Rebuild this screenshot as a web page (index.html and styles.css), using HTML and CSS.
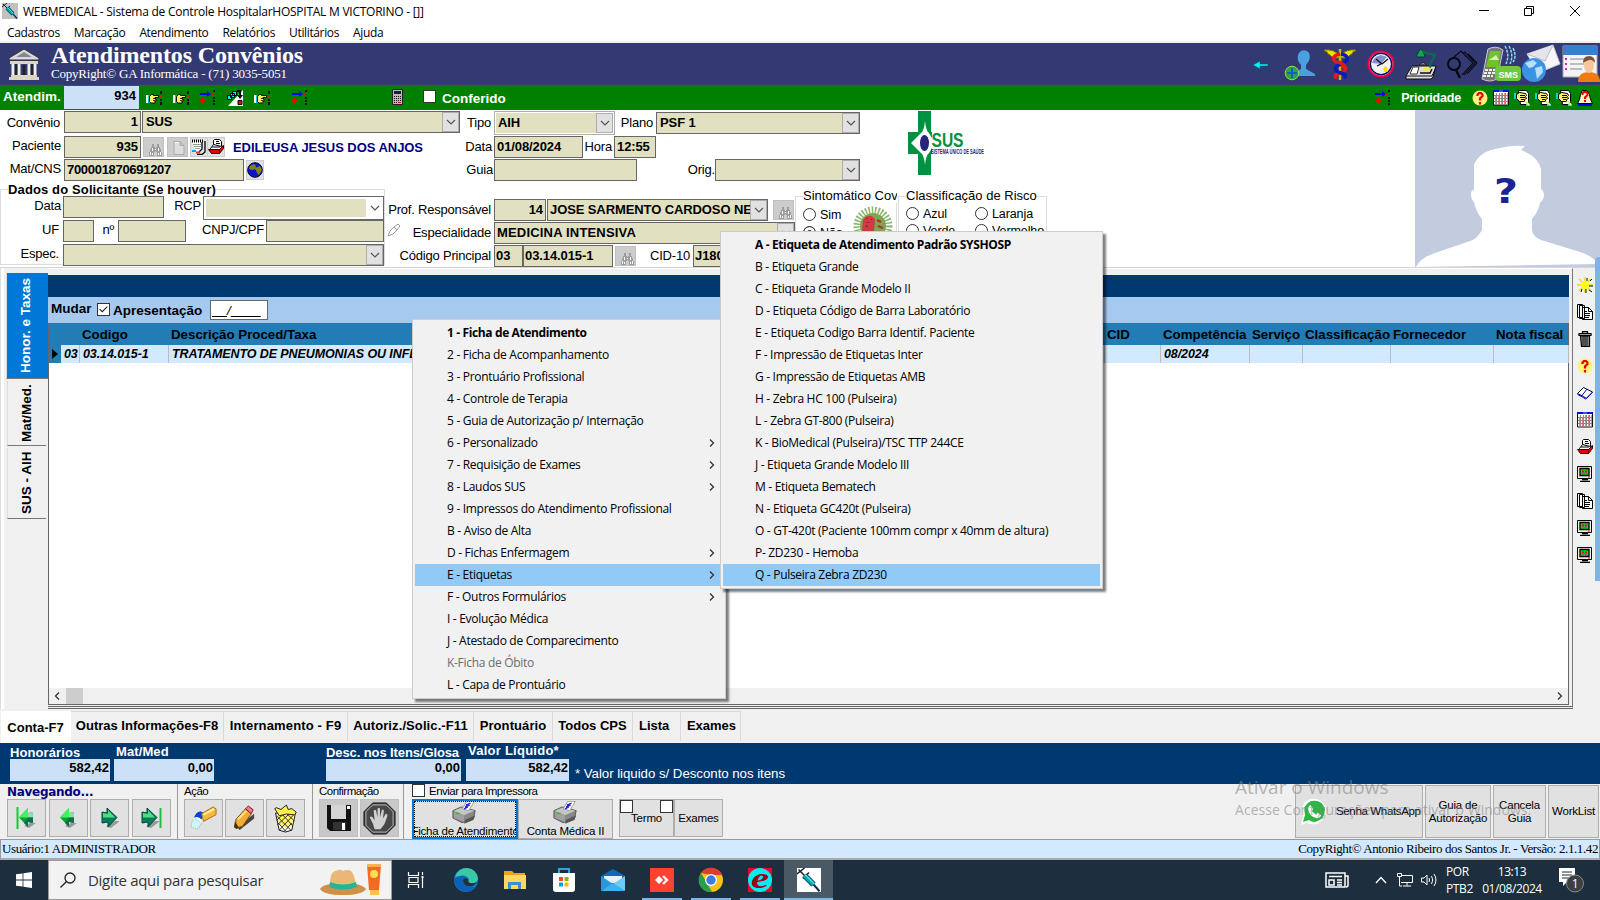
FILE: index.html
```html
<!DOCTYPE html>
<html lang="pt-BR">
<head>
<meta charset="utf-8">
<title>WEBMEDICAL - Sistema de Controle Hospitalar</title>
<link rel="stylesheet" href="styles.css">
</head>
<body>
<svg class="defs" aria-hidden="true">
  <symbol id="syringe" viewBox="0 0 16 16"><path d="M1 1l4 4M0 4l5-4M4 7l4-4" stroke="#222" stroke-width="1"/><path d="M5 5l6 6" stroke="#045" stroke-width="4"/><path d="M5 5l6 6" stroke="#0aa" stroke-width="2.600"/><path d="M5.500 4.500l6 6" stroke="#4de" stroke-width="1"/><path d="M11 11l4 4.500" stroke="#14305a" stroke-width="1.400"/></symbol>
  <symbol id="hand" viewBox="0 0 16 16"><path d="M0 5h2v8H0z" fill="#fff"/><path d="M2 5h1.500v8H2z" fill="#00c8d8"/><path d="M3.500 6.500l2-2h2v1h5v2H9v1.500h1V11H9v2H5l-1.500-1.500z" fill="#ffef60" stroke="#000" stroke-width=".9"/><path d="M7 8.500h3M7 10.500h2" stroke="#000" stroke-width=".8"/><path d="M15 1v3M15 9v2M15 12v3" stroke="#111" stroke-width="2"/><path d="M14 5.500h2v2h-2z" fill="#e11"/></symbol>
  <symbol id="route" viewBox="0 0 16 16"><path d="M0 4h9" stroke="#00f" stroke-width="2"/><path d="M7 1l4 3-4 3z" fill="#00f"/><path d="M0 11h6M3 8v6" stroke="#f00" stroke-width="2"/><path d="M14 0v2M14 7v2M14 10v2M14 13v2" stroke="#111" stroke-width="2"/><path d="M11 3h2v2h-2z" fill="#f00"/></symbol>
  <symbol id="boxes" viewBox="0 0 16 16"><path d="M1 16L16 0v16z" fill="#fff"/><path d="M5.500 1.500h4v4h-4zM3.500 3.500h4v4h-4zM.5 5.500h4v4h-4z" fill="#0ee" stroke="#000"/><path d="M10 1h3v5" stroke="#000" stroke-width="2" fill="none"/><path d="M10 5h6l-3 4z"/><path d="M11 10.500h4v4h-4z" fill="#f00" stroke="#000"/></symbol>
  <symbol id="calc" viewBox="0 0 11 16"><path d="M.5.5h10v15H.5z" fill="#bbb" stroke="#222"/><path d="M2 2h7v3H2z" fill="#123"/><path d="M2 7.500h7M2 9.500h7M2 11.500h7M2 13.500h4" stroke="#111" stroke-dasharray="1 1"/><path d="M6 13.500h3" stroke="#f00"/></symbol>
  <symbol id="bino" viewBox="0 0 13 12"><path d="M3 0h2v3H3zM8 0h2v3H8zM2 3h4v2H2zM7 3h4v2H7zM1 5h5v3H1zM7 5h5v3H7zM0 8h5v4H0zM8 8h5v4H8zM5.500 4h2v3h-2z" fill="#9d9d9d"/><path d="M3 4h1v3H3zM9 4h1v3H9zM1 8h1v3H1zM3 9h1v2H3zM9 9h1v2H9zM11 8h1v3h-1zM6 5h1v1H6z" fill="#fff"/></symbol>
  <symbol id="doc" viewBox="0 0 12 14"><path d="M1 .5h6l4 4v9H1zM7 .5v4h4" fill="#ddd" stroke="#aaa"/><path d="M2 1.500h4" stroke="#fff"/></symbol>
  <symbol id="notes" viewBox="0 0 14 16"><path d="M0 2.500h10v7l-3 4H4z" fill="#fff"/><path d="M.5.5v3M2.500.5v3M4.500.5v3M6.500.5v3M8.500.5v3M10.500.5v3" stroke="#000"/><path d="M1 5.500h8M2 7.500h7M3 9.500h5" stroke="#999"/><path d="M10 3v7l-3 3M13 2v11l-3 2.500H5" fill="none" stroke="#000" stroke-width="1.300"/><path d="M0 12h4" stroke="#00a0ff" stroke-width="2"/><path d="M4 13.500h4" stroke="#e33" stroke-width="2"/></symbol>
  <symbol id="tray" viewBox="0 0 16 16"><path d="M2.500 9.500l3-4h8l1 3-3 4h-8z" fill="#fff" stroke="#000"/><path d="M5.500 5.500v-4l1-1h5l2 2v5z" fill="#fff" stroke="#000"/><path d="M8 2.500h3M8 4.500h4M4 8h8" stroke="#000"/><path d="M.500 10.500h11l4-4v3l-4 5h-8z" fill="#e00000" stroke="#300"/><path d="M11.500 10.500v4" stroke="#600"/></symbol>
  <symbol id="globe" viewBox="0 0 16 16"><circle cx="8" cy="8" r="7.300" fill="#0a14cf" stroke="#003"/><path d="M3 4l4-2 2 2-1 3-3 1-3-1zM8 6l5-2 2 4-3 5-2-2-1-3-2-1z" fill="#868216"/></symbol>
  <symbol id="chev" viewBox="0 0 10 6"><path d="M1 1l4 4 4-4" fill="none" stroke="#555" stroke-width="1.200"/></symbol>
  <symbol id="right" viewBox="0 0 6 8"><path d="M1 .5L4.500 4 1 7.500" fill="none" stroke="#333" stroke-width="1.300"/></symbol>
  <symbol id="papers" viewBox="0 0 16 16"><path d="M.5.500h5v13h-5zM2.500 1.500h5v13h-5zM5.500 3.500h6l4 4v8h-10z" fill="#fff" stroke="#000"/><path d="M11.500 3.500v4h4" fill="none" stroke="#000"/><path d="M7 7.500h3M7 9.500h6M7 11.500h6M7 13.500h5" stroke="#000"/></symbol>
  <symbol id="pc" viewBox="0 0 16 16"><path d="M.5.500h14v12H.5z" fill="#eee" stroke="#000"/><path d="M3 2.500h9v7H3z" fill="#0d0" stroke="#000" stroke-width="1.300"/><path d="M5 4.500h2v2H5zM8 4.500h2v2H8z" fill="#f00"/><path d="M5 6.500h5v1H5z" fill="#f0f"/><path d="M11 11h2" stroke="#f00"/><path d="M5 13.500h6M3 15.500h10" stroke="#000" stroke-width="1.300"/></symbol>
  <symbol id="cal" viewBox="0 0 16 16"><path d="M.5 1h15v14H.5z" fill="#fff" stroke="#111"/><path d="M0 0h16v2H0z" fill="#0012e8"/><path d="M6 1h4" stroke="#88f"/><path d="M1 5.500h14M1 8.500h14M1 11.500h14M3.500 3v12M6.500 3v12M9.500 3v12M12.500 3v12" stroke="#888"/><path d="M2 7h13M2 10h13M2 13h13M8 4h7" stroke="#f00" stroke-dasharray="1 2"/></symbol>
  <symbol id="help" viewBox="0 0 16 16"><circle cx="8" cy="8" r="7.500" fill="#fff37a"/><path d="M5.500 6V4.500L7 3h2l1.500 1.500V6L8 8.500v2M8 12v2.500" fill="none" stroke="#e80000" stroke-width="2.200"/></symbol>
  <symbol id="scribe" viewBox="0 0 16 16"><path d="M4.500.5h8l2 3v8l-2 3h-6z" fill="#fff" stroke="#000"/><path d="M2.500 4.500l3-2 6 1 1 2-1 1 1 2-2 1v2h-5l-3-3z" fill="#ffec75" stroke="#000"/><path d="M6 5.500h5M6 7.500h5M7 9.500h3" stroke="#000"/><path d="M0 3h2v6H0zM12 14h4v2h-4z" fill="#00d6df"/><path d="M11 11l4 4" stroke="#ffec75" stroke-width="2"/></symbol>
  <symbol id="wizard" viewBox="0 0 16 16"><path d="M.5 13.500l2-4 1-5 2-4h4l3 4 1 5 2 4z" fill="#fff9c0" stroke="#000"/><path d="M5.500 5V3.500L7 2h2l1.500 1.500V5L8 7.500V9M8 10v2" fill="none" stroke="#e00" stroke-width="2"/><path d="M1 15h14" stroke="#00f" stroke-width="2"/></symbol>
  <symbol id="sun" viewBox="0 0 16 16"><path d="M8 0v16M0 8h16M2 2l12 12M2 14L14 2" stroke="#e6dd00" stroke-width="1.400"/><path d="M9 12v4M12 13l3 2M12 9h4M10 1v3M13 4l2-2M4 15l1-3" stroke="#111"/><circle cx="8" cy="8" r="4" fill="#ffff00"/></symbol>
  <symbol id="trash" viewBox="0 0 16 16"><path d="M5.500 2V.500h5V2M2 2.500h12v2H2zM3.500 5h9v10.500h-8z" fill="#999" stroke="#000" stroke-width="1.200"/><path d="M6 5v10M8 5v10M10 5v10" stroke="#000"/></symbol>
  <symbol id="book" viewBox="0 0 16 16"><path d="M.5 8.500l6-6 3 1.500 6 3-6 6.500-3-2z" fill="#fff" stroke="#000"/><path d="M5 10.500L10 4M.500 9.500l5 2.500 3 2 7-6.500" fill="none" stroke="#00e"/></symbol>
  <symbol id="printer" viewBox="0 0 28 24"><path d="M1 10l9-4 15 4-2 9-12 4L1 18z" fill="#888" stroke="#555"/><path d="M2 10l8-3 14 3-11 5z" fill="#c5c5c5"/><path d="M2 11l11 4v7L2 18z" fill="#a0a0a0"/><path d="M11 8l5-8h8l-6 10z" fill="#fff" stroke="#999"/><path d="M15 4l5-2M14 6l5-2M13 8l4-2" stroke="#2222e0" stroke-width="1.500"/><path d="M4 13h4" stroke="#24c32a" stroke-width="1.500"/><path d="M14 20l11-5-2 5-10 4z" fill="#555"/></symbol>
  <symbol id="navleft" viewBox="0 0 18 22"><path d="M6 19l6-3h6l-7 5z" fill="#999"/><path d="M1 10.500L10 1v5l5-1v11l-5-1v5z" fill="#149c38"/><path d="M1 10.500L10 1v9.500z" fill="#3cf45a"/><path d="M10 6l5-1v5.500h-5z" fill="#8fdcae"/><path d="M10 10.500h5V16l-5-1v5l-4-4z" fill="#08704a"/></symbol>
  <symbol id="navright" viewBox="0 0 18 22"><path d="M5 20l9-6h5l-9 7z" fill="#999"/><path d="M1 5l5 1V1l10 9.500L7 20v-5l-6 1z" fill="#087c5c" stroke="#044"/><path d="M2 6l5 1V3l7 7.500H2z" fill="#4fe07c"/></symbol>
</svg>

<header class="titlebar">
  <svg class="app-icon"><use href="#syringe"/></svg>
  <span class="title">WEBMEDICAL - Sistema de Controle HospitalarHOSPITAL M VICTORINO - []]</span>
  <svg class="win-btns" viewBox="0 0 110 16"><path d="M4 7.500h10M49.500 5.500h7v7h-7zM51.500 5.500v-2h7v7h-2M95 3l10 10M105 3L95 13" fill="none" stroke="#000"/></svg>
</header>
<nav class="menubar"><span>Cadastros</span><span>Marcação</span><span>Atendimento</span><span>Relatórios</span><span>Utilitários</span><span>Ajuda</span></nav>

<section class="banner">
  <svg class="bank" viewBox="0 0 32 32"><path d="M1 10L16 1l15 9v2H1z" fill="#d9d9d9" stroke="#333"/><path d="M8 9l8-5 8 5z" fill="#888"/><path d="M2 13h28v3H2zM3 27h26v2H3zM1 29h30v3H1z" fill="#d9d6c4"/><path d="M5 16v11M11 16v11M21 16v11M27 16v11" stroke="#eee" stroke-width="3"/><path d="M8 16v11M16 17v10M24 16v11" stroke="#222" stroke-width="2.500"/></svg>
  <div class="brand"><h1>Atendimentos Convênios</h1><p>CopyRight© GA Informática - (71) 3035-5051</p></div>
  <div class="banner-icons">
    <svg class="b-arrow" viewBox="0 0 16 10"><path d="M0 5l7-4v3h8v2H7v3z" fill="#00f0f8" stroke="#055" stroke-width=".5"/></svg>
    <svg class="b-user" viewBox="0 0 32 32"><path d="M10 27l4-5 3-2v-4c-4-4-4-9-2-12 3-4 8-3 10 0 2 4 0 9-3 12v4l9 5v2z" fill="#4a9fe0"/><circle cx="8" cy="24" r="6.800" fill="#23a84d" stroke="#a2d935"/><path d="M8 19v10M3 24h10" stroke="#1c5cc0" stroke-width="2"/></svg>
    <svg class="b-cad" viewBox="0 0 32 32"><path d="M15 7Q10 1 0 2q1 2 3 2 0 2 3 3 1 3 9 3zM17 7q5-6 15-5-1 2-3 2 0 2-3 3-1 3-9 3z" fill="#efe000" stroke="#776b00"/><path d="M16 1v31" stroke="#c8b800" stroke-width="2.500"/><path d="M16 6c-9 2-8 7 0 10s7 7 0 9-5 4-3 5" fill="none" stroke="#e11b1b" stroke-width="3.500"/><path d="M17 6c9 2 8 7 0 10s-7 7 0 9 4 4 3 5" fill="none" stroke="#0b18c8" stroke-width="3.500"/><path d="M14 14q8 2 6 7" fill="none" stroke="#e11b1b" stroke-width="3.500"/></svg>
    <svg class="b-clock" viewBox="0 0 28 28"><circle cx="14" cy="14" r="12.500" fill="#f2f2f8" stroke="#ff0044" stroke-width="2"/><circle cx="14" cy="14" r="10.700" fill="none" stroke="#101060" stroke-width="1.500"/><path d="M5 13q2-7 9-8l6 2-6 7z" fill="#8290cc"/><path d="M9 9l6 5 6-5M10 16l4-2" stroke="#111" fill="none" stroke-width="1.300"/><path d="M16.500 22v-4l2-2 2 2v4z" fill="#ffe200"/></svg>
    <svg class="b-desk" viewBox="0 0 32 32"><path d="M1 28l6-10h24l-3 11-2 2H1z" fill="#ddd" stroke="#111"/><path d="M1 28h26l4-9" fill="none" stroke="#111"/><path d="M5 26l3-7h6l-2 7z" fill="#fff" stroke="#333"/><path d="M15 25h10l2-4" stroke="#111" fill="none" stroke-width="1.500"/><path d="M11 9l4-8 3 2 2 6z" fill="#13a463" stroke="#042"/><path d="M17 3l4 2 9 2-5 9v4" fill="none" stroke="#087049" stroke-width="2"/><path d="M18 21h7" stroke="#ffe544" stroke-width="3"/><path d="M14 17l4-3 4 3z" fill="#888" stroke="#222"/></svg>
    <svg class="b-find" viewBox="0 0 32 32"><circle cx="8" cy="14" r="6" fill="none" stroke="#080812" stroke-width="2"/><path d="M10 20l4 8" stroke="#080812" stroke-width="2.500"/><path d="M8 7l7-6 12 12-11 12M17 4l2-2 10 11-11 12M22 4l9 9-10 11" fill="none" stroke="#080812" stroke-width="1.100"/></svg>
    <svg class="b-sms" viewBox="0 0 40 38"><path d="M7 4q8-4 15 1l-6 29q-7 4-15 0z" fill="#777" stroke="#ccc"/><path d="M9 6h11l-3 16H5z" fill="#6ec22c"/><path d="M8 15l7-5 3 5z" fill="#d2f5a8"/><path d="M4 25h11M3 28h11M2 31h10" stroke="#eee" stroke-width="2" stroke-dasharray="3 1"/><path d="M24 1q5 9 1 18M28 1q5 9 1 18M32 3q4 8 0 14" fill="none" stroke="#8adcee" stroke-width="1.500" stroke-dasharray="3 1"/><rect x="14" y="21" width="26" height="15" rx="4" fill="#6fc93e"/><text x="17.500" y="32.500" class="sms">SMS</text></svg>
    <svg class="b-mail" viewBox="0 0 40 38"><path d="M6 9L32 0l7 19-22 9z" fill="#f6f6fa" stroke="#c5c5d4"/><path d="M6 9l18 7 8-16" fill="#e4e4ed" stroke="#bbb"/><circle cx="13" cy="25" r="12" fill="#3b93e4"/><path d="M4 18l8-3 4 3-4 4-4 1zM14 23l7-2 1 6-6 7z" fill="#b8def9"/></svg>
    <svg class="b-card" viewBox="0 0 38 38"><path d="M1 1h34v31H1z" fill="#f4f4f8" stroke="#aaa"/><path d="M1 1h34v9H1z" fill="#367fce"/><path d="M8 14h14M8 19h14M8 24h12" stroke="#aaa" stroke-width="1.500"/><path d="M3 14h2M3 19h2M3 24h2" stroke="#c42aac" stroke-width="2"/><path d="M16 37q0-10 11-10t11 10z" fill="#f07b10"/><ellipse cx="27" cy="20" rx="5" ry="8" fill="#f6c799"/><path d="M21 18q0-7 6-7t6 7q-3-4-6-3t-6 3" fill="#805037"/></svg>
  </div>
</section>

<section class="greenbar">
  <label class="g-label">Atendim.</label><div class="g-value">934</div>
  <div class="g-icons"><svg><use href="#hand"/></svg><svg><use href="#hand"/></svg><svg><use href="#route"/></svg><svg><use href="#boxes"/></svg><svg><use href="#hand"/></svg><svg class="gap"><use href="#route"/></svg></div>
  <svg class="g-calc"><use href="#calc"/></svg><i class="box"></i><span class="g-conf">Conferido</span>
  <div class="g-right"><svg><use href="#route"/></svg><span>Prioridade</span><svg><use href="#help"/></svg><svg><use href="#cal"/></svg><svg><use href="#scribe"/></svg><svg><use href="#scribe"/></svg><svg><use href="#scribe"/></svg><svg><use href="#wizard"/></svg></div>
</section>

<section class="form">
  <div class="fields">
    <div class="upper">
      <div class="col-a">
        <div class="row r-conv"><label>Convênio</label><div class="in num">1</div><div class="in combo">SUS<b><svg><use href="#chev"/></svg></b></div></div>
        <div class="row r-pac"><label>Paciente</label><div class="in num">935</div><i class="btn dis"><svg class="s-bino"><use href="#bino"/></svg></i><i class="btn dis"><svg class="s-doc"><use href="#doc"/></svg></i><i class="btn"><svg><use href="#notes"/></svg></i><i class="btn"><svg><use href="#tray"/></svg></i><strong>EDILEUSA JESUS DOS ANJOS</strong></div>
        <div class="row r-mat"><label>Mat/CNS</label><div class="in">700001870691207</div><i class="btn"><svg><use href="#globe"/></svg></i></div>
      </div>
      <div class="col-b">
        <div class="row r-tipo"><label>Tipo</label><div class="in combo soft">AIH<b><svg><use href="#chev"/></svg></b></div><label>Plano</label><div class="in combo">PSF 1<b><svg><use href="#chev"/></svg></b></div></div>
        <div class="row r-data"><label>Data</label><div class="in">01/08/2024</div><label>Hora</label><div class="in">12:55</div></div>
        <div class="row r-guia"><label>Guia</label><div class="in"></div><label>Orig.</label><div class="in combo"><b><svg><use href="#chev"/></svg></b></div></div>
      </div>
      <svg class="sus" viewBox="0 0 78 64"><path d="M10 0h13v64H10zM0 21h24v22H0z" fill="#009240"/><path d="M17 10q1 10 4 12l6 10-6 10q-3 2-4 12-1-10-4-12L3 32l10-10q3-2 4-12z" fill="#fff"/><ellipse cx="16.500" cy="32" rx="4.500" ry="8" fill="#27247b"/><text x="23.500" y="36" class="sus-a" textLength="32" lengthAdjust="spacingAndGlyphs">SUS</text><text x="23" y="43" class="sus-b" textLength="53" lengthAdjust="spacingAndGlyphs">SISTEMA ÚNICO DE SAÚDE</text></svg>
    </div>
    <div class="lower">
      <fieldset class="solic"><legend>Dados do Solicitante (Se houver)</legend>
        <div class="row r-s1"><label>Data</label><div class="in"></div><label>RCP</label><div class="in combo white"><b><svg><use href="#chev"/></svg></b></div></div>
        <div class="row r-s2"><label>UF</label><div class="in"></div><label>nº</label><div class="in"></div><label>CNPJ/CPF</label><div class="in"></div></div>
        <div class="row r-s3"><label>Espec.</label><div class="in combo"><b><svg><use href="#chev"/></svg></b></div></div>
      </fieldset>
      <div class="prof">
        <div class="row r-p1"><label>Prof. Responsável</label><div class="in num">14</div><div class="in combo">JOSE SARMENTO CARDOSO NE<b><svg><use href="#chev"/></svg></b></div><i class="btn dis"><svg class="s-bino"><use href="#bino"/></svg></i></div>
        <div class="row r-p2"><svg class="dropper" viewBox="0 0 14 14"><path d="M1 13l2-5 4-4 3 3-4 4zM7 4l4-3 2 2-3 4" fill="#fff" stroke="#999"/></svg><label>Especialidade</label><div class="in combo">MEDICINA INTENSIVA<b><svg><use href="#chev"/></svg></b></div></div>
        <div class="row r-p3"><label>Código Principal</label><div class="in">03</div><div class="in">03.14.015-1</div><i class="btn dis"><svg class="s-bino"><use href="#bino"/></svg></i><label>CID-10</label><div class="in">J180</div></div>
      </div>
      <fieldset class="covid"><legend>Sintomático Covid</legend><div class="radios"><span><i></i>Sim</span><span><i class="on"></i>Não</span></div>
        <svg viewBox="0 0 40 34"><circle cx="20" cy="20" r="15" fill="none" stroke="#8fb573" stroke-width="9" stroke-dasharray="1.500 1.500"/><circle cx="20" cy="20" r="13" fill="#7da653"/><path d="M10 14q3-5 9-4l3 3-1 12H9z" fill="#cf3a44"/><path d="M24 14l4 2M25 20l5 2" stroke="#c23" stroke-width="2"/><path d="M14 12v12M19 13l-7 8" stroke="#711" stroke-dasharray="1 3"/></svg></fieldset>
      <fieldset class="risco"><legend>Classificação de Risco</legend><div class="radios"><span><i></i>Azul</span><span><i></i>Laranja</span><span><i></i>Verde</span><span><i></i>Vermelho</span></div></fieldset>
    </div>
  </div>
  <svg class="photo" viewBox="0 0 185 157"><path d="M0 0h185v157H0z" fill="#c3cbdf"/><path d="M1 157q4-9 19-14l38-13q5-3 9-10V109q-6-7-8-17-3-2-3-8 0-4 3-4V55q5-14 26-17 12-3 25-2l-4 4q17 6 20 19v20q3 2 3 5 0 6-4 9-2 9-8 16v11q1 7 9 10l39 12q13 4 18 12z" fill="#fff"/><text x="79" y="93" class="quest" textLength="24" lengthAdjust="spacingAndGlyphs">?</text></svg>
</section>

<main class="panel">
  <aside class="vtabs"><span class="active">Honor. e Taxas</span><span>Mat/Med.</span><span>SUS - AIH</span></aside>
  <section class="sheet">
    <div class="navy"></div>
    <div class="mudar"><span>Mudar</span><i class="box"><svg viewBox="0 0 13 13"><path d="M2 6l3 3 6-6" fill="none" stroke="#222" stroke-width="1.300"/></svg></i><span class="apres">Apresentação</span><div class="mask"><u>&nbsp;&nbsp;&nbsp;&nbsp;</u>/<u>&nbsp;&nbsp;&nbsp;&nbsp;&nbsp;&nbsp;&nbsp;&nbsp;</u></div></div>
    <div class="gridbox">
      <div class="trow thead"><span></span><span></span><span>Codigo</span><span>Descrição Proced/Taxa</span><span>CID</span><span>Competência</span><span>Serviço</span><span>Classificação</span><span>Fornecedor</span><span>Nota fiscal</span></div>
      <div class="trow tbody"><span class="mark"></span><span>03</span><span>03.14.015-1</span><span>TRATAMENTO DE PNEUMONIAS OU INFLUENZA (GRIPE)</span><span></span><span>08/2024</span><span></span><span></span><span></span><span></span></div>
      <div class="void"></div>
      <div class="hscroll"><svg class="flip"><use href="#right"/></svg><i></i><svg><use href="#right"/></svg></div>
    </div>
  </section>
  <aside class="tools"><svg><use href="#sun"/></svg><svg><use href="#papers"/></svg><svg><use href="#trash"/></svg><svg><use href="#help"/></svg><svg><use href="#book"/></svg><svg><use href="#cal"/></svg><svg><use href="#tray"/></svg><svg><use href="#pc"/></svg><svg><use href="#papers"/></svg><svg><use href="#pc"/></svg><svg><use href="#pc"/></svg></aside>
</main>

<nav class="tabs"><span class="active">Conta-F7</span><span>Outras Informações-F8</span><span>Internamento - F9</span><span>Autoriz./Solic.-F11</span><span>Prontuário</span><span>Todos CPS</span><span>Lista</span><span>Exames</span></nav>

<section class="totals">
  <div class="tot t1"><label>Honorários</label><div>582,42</div></div>
  <div class="tot t2"><label>Mat/Med</label><div>0,00</div></div>
  <div class="tot t3"><label>Desc. nos Itens/Glosa</label><div>0,00</div></div>
  <div class="tot t4"><label>Valor Líquido*</label><div>582,42</div></div>
  <p>* Valor liquido s/ Desconto nos itens</p>
</section>

<section class="toolbar">
  <div class="grp g-nav"><h2>Navegando...</h2><div>
    <button><svg viewBox="0 0 24 22"><path d="M2.500 0v22" stroke="#1c3" stroke-width="2"/><use href="#navleft" x="3" width="18" height="22"/></svg></button>
    <button><svg viewBox="0 0 24 22"><use href="#navleft" x="3" width="18" height="22"/></svg></button>
    <button><svg viewBox="0 0 24 22"><use href="#navright" x="3" width="18" height="22"/></svg></button>
    <button><svg viewBox="0 0 24 22"><use href="#navright" x="2" width="18" height="22"/><path d="M21.500 1v20" stroke="#2b4" stroke-width="2"/></svg></button></div></div>
  <div class="grp g-acao"><h3>Ação</h3><div>
    <button><svg viewBox="0 0 28 26"><path d="M4 14Q6 5 13 6l4 5-5 4-5 9-6-3z" fill="#fff"/><path d="M4 12Q8 3 14 7l-2 7q-3-4-8-2" fill="#0b3fd9"/><path d="M12 8L24 1l3 2v6l-13 7z" fill="#f4ba3b" stroke="#a87010"/><path d="M14 9l11-6" stroke="#fff0a0" stroke-width="2"/><path d="M2 16l4-3 6 5-4 6-7-2z" fill="#cdf6f6" stroke="#8bb" stroke-dasharray="1 1"/></svg></button>
    <button><svg viewBox="0 0 28 26"><path d="M6 22L24 8v5L9 25z" fill="#444"/><path d="M5 14L15 3l6 5-9 13-7 2z" fill="#f5ac32" stroke="#7a4a10"/><path d="M7 14l9-9" stroke="#ffe08a" stroke-width="2"/><path d="M15 3l3-3 5 4-2 4z" fill="#ed7b91" stroke="#812"/><path d="M4 16l4 6-2 2-3-2z" fill="#4b2c10"/></svg></button>
    <button><svg viewBox="0 0 26 30"><path d="M2 9h22l-4 19-7 2-7-2z" fill="#fff" stroke="#000"/><path d="M3 11h20l-3 12-7 2-7-4z" fill="#fff36a"/><path d="M3 12l16 16M9 10l12 13M15 10l8 8M22 11L6 28M17 10L4 22M11 10l-8 7M20 20l-8 9M5 20l8 9" stroke="#222"/><path d="M1 4l2-1 5 2 6-5 2 5 4-1 5 4-2 3-9-1-8 2z" fill="#ffef50" stroke="#111"/></svg></button></div></div>
  <div class="grp g-confirm"><h3>Confirmação</h3><div>
    <button class="dis"><svg viewBox="0 0 26 28"><path d="M1 1h24v26H4l-3-3z" fill="#111"/><path d="M5 1h15v14H5z" fill="#d5d5d5"/><path d="M7 18h13v8H7z" fill="#333"/><path d="M16 19h3v7h-3zM21 2h3v3h-3z" fill="#fff"/></svg></button>
    <button class="dis"><svg class="stop" viewBox="0 0 34 34"><path d="M10 1h14l9 9v14l-9 9H10l-9-9V10z" fill="#484848" stroke="#111"/><path d="M10 3h14l7 7v14l-7 7H10l-7-7V10z" fill="none" stroke="#bbb"/><path d="M12 28l-2-6-3-6q1-2 3 0l2 3-1-10q1.500-2 2.500 0l1.500 7V7q1.500-2 2.500 0v9l2-8q1.500-1 2 1l-1 8 3-5q2 0 1.500 3l-3 8-4 5z" fill="#d0d0d0"/></svg></button></div></div>
  <div class="grp g-print"><h3><i class="box"></i>Enviar para Impressora</h3><div>
    <button class="focus"><svg><use href="#printer"/></svg><span>Ficha de Atendimento</span></button><button><svg><use href="#printer"/></svg><span>Conta Médica II</span></button></div></div>
  <button class="b-termo"><span class="checks"><i class="box"></i><i class="box"></i></span><span class="tx">Termo</span></button><button class="b-exames">Exames</button>
  <div class="g-end"><button class="wa"><svg viewBox="0 0 28 30"><path d="M1 28L3 20Q-1 7 10 2q11-2 16 8 2 11-9 17-7 1-10-1z" fill="#fff"/><path d="M3 25l2-7Q2 8 11 4q11-2 14 8 0 11-10 13-4 0-6-2z" fill="#28b840"/><path d="M9 9q2-2 3 1l1 2-1 2q2 3 4 3l2-1 3 2q-1 4-5 3-7-2-8-9z" fill="#fff"/></svg>Senha WhatsApp</button><button class="guia">Guia de<br>Autorização</button><button class="canc">Cancela<br>Guia</button><button class="work">WorkList</button></div>
</section>

<footer class="status"><span>Usuário:1 ADMINISTRADOR</span><span>CopyRight© Antonio Ribeiro dos Santos Jr. - Versão: 2.1.1.42</span></footer>

<footer class="taskbar">
  <div class="start"><svg viewBox="0 0 16 16"><path d="M0 2.300L6.600 1.400v6.200H0zM7.400 1.300L16 0v7.600H7.400zM0 8.400h6.600v6.200L0 13.700zM7.400 8.400H16V16l-8.600-1.200z" fill="#fff"/></svg></div>
  <div class="search"><svg class="mag" viewBox="0 0 16 16"><circle cx="10" cy="6" r="5" fill="none" stroke="#222" stroke-width="1.300"/><path d="M6.300 9.700L.5 15.500" stroke="#222" stroke-width="1.300"/></svg><span>Digite aqui para pesquisar</span>
    <svg class="hat" viewBox="0 0 64 32"><path d="M0 25q2-4 11-5h25q8 2 10 5-4 6-23 6T0 25z" fill="#cf9147"/><path d="M10 21q0-14 6-14 4-3 7 0 4-2 8 0 3 2 5 14-12 6-26 0z" fill="#e9b878"/><path d="M10 18q13 5 26 0l1 5q-14 5-28 0z" fill="#25b49a"/><path d="M47 1h14l-2 25H49z" fill="#f46a23"/><path d="M47 0h14v3H47z" fill="#ffb24b"/><circle cx="54" cy="10" r="4" fill="#ffdf4f"/><path d="M50 26h9v5h-9z" fill="#ffc247"/></svg></div>
  <div class="apps">
    <span class="tview"><svg viewBox="0 0 16 16"><path d="M.5 0v3.500h10V0M.500 16v-3.500h10V16M1 5.500h9v5H1zM14.500 0v3M14.500 6v10" fill="none" stroke="#fff" stroke-width="1.200"/><path d="M13.500 4h2v2h-2z" fill="#fff"/></svg></span>
    <span><svg viewBox="0 0 24 24"><circle cx="12" cy="12" r="12" fill="#1178c8"/><path d="M1 9Q4 0 13 0q10 1 11 11-1 5-8 4-3-1-1-4-3-6-14-2z" fill="#3ac9a4"/><path d="M0 11q9-6 13 0-3 8 8 8-5 6-12 4-8-3-9-12z" fill="#0c60b5"/><path d="M9 12q2-3 5-1 0 3 2 4 4 1 7-1-3 5-8 4-5 0-6-6z" fill="#20303d"/></svg></span>
    <span><svg viewBox="0 0 24 24"><path d="M1 3h8l2 2h11v16H1z" fill="#e7a61a"/><path d="M1 7h22v14H1z" fill="#ffd766"/><path d="M5 21v-7h13v7h-3v-4H8v4z" fill="#3d8ed3"/></svg></span>
    <span><svg viewBox="0 0 24 24"><path d="M7 5V1h10v4" fill="none" stroke="#2aa6e5" stroke-width="2"/><path d="M1 5h22v16q0 3-3 3H4q-3 0-3-3z" fill="#fff"/><path d="M7 9h4v4H7z" fill="#f25022"/><path d="M12.500 9h4v4h-4z" fill="#7fba00"/><path d="M7 14.500h4v4H7z" fill="#00a4ef"/><path d="M12.500 14.500h4v4h-4z" fill="#ffb900"/></svg></span>
    <span><svg viewBox="0 0 24 24"><path d="M0 8l12-7 12 7v3H0z" fill="#1268b8"/><path d="M3 8h18v7H3z" fill="#e6f3fc"/><path d="M0 8l12 8L0 23z" fill="#2a96dc"/><path d="M24 8l-12 8 12 7z" fill="#6acbf7"/><path d="M0 23l12-8 12 8z" fill="#3fb2ee"/></svg></span>
    <span class="run"><svg viewBox="0 0 24 24"><path d="M0 0h24v24H0z" fill="#ff4132"/><path d="M9 8l4 4-4 4-4-4z" fill="#fff"/><path d="M13 8l4 4-4 4" stroke="#fff" stroke-width="2.400" fill="none"/></svg></span>
    <span class="run"><svg viewBox="0 0 24 24"><circle cx="12" cy="12" r="12" fill="#fbc116"/><path d="M2 5A12 12 0 0 1 23 7H12z" fill="#e23c2e"/><path d="M2 5L8 15l5 9A12 12 0 0 1 2 5z" fill="#2b9e4b"/><circle cx="12" cy="12" r="6" fill="#fff"/><circle cx="12" cy="12" r="4.700" fill="#3b7de8"/></svg></span>
    <span class="run"><svg viewBox="0 0 24 24"><path d="M0 0h24v24H0z" fill="#f00020"/><circle cx="12" cy="12" r="12" fill="#00eef2"/><text x="3" y="20" class="cursive" textLength="18" lengthAdjust="spacingAndGlyphs">e</text></svg></span>
    <span class="run cur"><svg viewBox="0 0 24 24"><path d="M0 0h24v24H0z" fill="#fff"/><use href="#syringe" width="24" height="24"/></svg></span>
  </div>
  <div class="tray">
    <svg class="news" viewBox="0 0 24 16"><path d="M1 1h19v14H1zM20 4h3v9q0 2-2 2" fill="none" stroke="#fff" stroke-width="1.500"/><path d="M4 4.500h13M12 8h5M12 10.500h5M12 13h5M4 8h5v5H4z" fill="none" stroke="#fff" stroke-width="1.500"/></svg>
    <svg class="up" viewBox="0 0 12 8"><path d="M1 7l5-5.500L11 7" fill="none" stroke="#fff" stroke-width="1.300"/></svg>
    <svg class="net" viewBox="0 0 16 14"><path d="M5 2.500h10.500v7H4M10 9.500v3M6 13h8M.500.500h4v3h-4zM2.500 4v9H5" fill="none" stroke="#fff"/></svg>
    <svg class="vol" viewBox="0 0 17 14"><path d="M.500 5h2.500L6 2v10L3 9H.500zM8 5q1 2 0 4M10.500 3q2.500 4 0 8M13 1q4 6 0 12" fill="none" stroke="#fff"/></svg>
    <div class="lang">POR<br>PTB2</div><div class="clock">13:13<br>01/08/2024</div>
    <svg class="bell" viewBox="0 0 26 26"><path d="M0 0h16v14H8l-4 4v-4H0z" fill="#fff"/><path d="M3 4h10M3 7h10M3 10h7" stroke="#1d2b38"/><circle cx="16" cy="15.500" r="8.500" fill="#3b3e42" stroke="#87898c"/><text x="16" y="20" text-anchor="middle" class="badge">1</text></svg>
  </div>
</footer>

<ul class="menu m1"><li class="bold">1 - Ficha de Atendimento</li><li>2 - Ficha de Acompanhamento</li><li>3 - Prontuário Profissional</li><li>4 - Controle de Terapia</li><li>5 - Guia de Autorização p/ Internação</li><li>6 - Personalizado<svg><use href="#right"/></svg></li><li>7 - Requisição de Exames<svg><use href="#right"/></svg></li><li>8 - Laudos SUS<svg><use href="#right"/></svg></li><li>9 - Impressos do Atendimento Profissional</li><li>B - Aviso de Alta</li><li>D - Fichas Enfermagem<svg><use href="#right"/></svg></li><li class="sel">E - Etiquetas<svg><use href="#right"/></svg></li><li>F - Outros Formulários<svg><use href="#right"/></svg></li><li>I - Evolução Médica</li><li>J - Atestado de Comparecimento</li><li class="off">K-Ficha de Óbito</li><li>L - Capa de Prontuário</li></ul>
<ul class="menu m2"><li class="bold">A - Etiqueta de Atendimento Padrão SYSHOSP</li><li>B - Etiqueta Grande</li><li>C - Etiqueta Grande Modelo II</li><li>D - Etiqueta Código de Barra Laboratório</li><li>E - Etiqueta Codigo Barra Identif. Paciente</li><li>F - Impressão de Etiquetas Inter</li><li>G - Impressão de Etiquetas AMB</li><li>H - Zebra HC 100 (Pulseira)</li><li>L - Zebra GT-800 (Pulseira)</li><li>K - BioMedical (Pulseira)/TSC TTP 244CE</li><li>J - Etiqueta Grande Modelo III</li><li>M - Etiqueta Bematech</li><li>N - Etiqueta GC420t (Pulseira)</li><li>O - GT-420t (Paciente 100mm compr x 40mm de altura)</li><li>P- ZD230 - Hemoba</li><li class="sel">Q - Pulseira Zebra ZD230</li></ul>
<div class="edge"></div>
<div class="activate"><b>Ativar o Windows</b><span>Acesse Configurações para ativar o Windows.</span></div>
</body>
</html>
```
FILE: styles.css
```css
*{box-sizing:border-box}
body{margin:0;width:1600px;height:900px;overflow:hidden;position:relative;background:#fff;color:#000;font:13px/15px "Liberation Sans",Arial,sans-serif;display:flex;flex-direction:column}
svg{display:block;flex:none;overflow:visible}
.defs{position:absolute;width:0;height:0}
h1,h2,h3,p,ul{margin:0;padding:0}
i{font-style:normal;display:block;flex:none}
.box{width:13px;height:13px;background:#fff;border:1px solid #333}
button{padding:0;margin:0;background:#e1e1e1;border:1px solid #adadad;color:#000;font:11.5px/13px "Liberation Sans",Arial,sans-serif;letter-spacing:-.2px;border-radius:0}

.titlebar{height:22px;display:flex;align-items:center;padding-left:2px;font:12px/22px "Open Sans","Noto Sans",sans-serif;letter-spacing:-.25px}
.app-icon{width:16px;height:16px;background:#c0c0c0;margin-right:5px}
.title{flex:1;padding-top:1px}
.win-btns{width:110px;height:16px;margin-right:15px}
.menubar{height:21px;border-bottom:2px solid #f0f0f0;display:flex;gap:14px;padding-left:7px;font:12px/21px "Open Sans","Noto Sans",sans-serif;letter-spacing:-.36px}

.banner{height:42px;background:#333972;display:flex;color:#fff;padding-left:8px}
.bank{width:32px;height:32px;margin:5px 11px 0 0}
.brand{flex:1;font-family:"Liberation Serif","Times New Roman",serif}
.brand h1{font-size:24px;line-height:25px;font-weight:bold;letter-spacing:-.15px}
.brand p{font-size:13px;line-height:13px;margin-top:-1px;letter-spacing:-.2px}
.banner-icons{display:flex;width:348px}
.b-arrow{width:16px;height:10px;margin:17px 15px 0 1px}
.b-user{width:32px;height:32px;margin:6px 8px 0 0}
.b-cad{width:32px;height:32px;margin:5px 11px 0 0}
.b-clock{width:28px;height:28px;margin:7px 10px 0 0}
.b-desk{width:32px;height:32px;margin:5px 9px 0 0}
.b-find{width:32px;height:32px;margin:7px 3px 0 0}
.b-sms{width:40px;height:38px;margin-top:2px}
.b-mail{width:40px;height:38px;margin-top:2px}
.b-card{width:38px;height:38px;margin:2px 0 0 1px}
.sms{font:bold 9px "Liberation Sans",sans-serif;fill:#fff}

.greenbar{height:25px;background:#008000;display:flex;color:#fff;font-weight:bold;font-size:13.5px}
.g-label{width:64px;padding:4px 0 0 3px}
.g-value{width:75px;height:23px;margin-top:1px;background:#cce0f8;color:#000;text-align:right;padding:2px 3px 0 0;font-size:13px}
.g-icons{display:flex;padding:5px 0 0 7px;gap:11px;width:252px}
.g-icons svg,.g-right svg{width:16px;height:16px}
.g-icons .gap{margin-left:11px}
.g-calc{width:11px;height:16px;margin:4px 20px 0 1px}
.greenbar>.box{margin:5px 6px 0 0}
.g-conf{padding-top:6px;flex:1}
.g-right{display:flex;padding-top:5px;margin-right:7px;gap:5px}
.g-right span{font-size:12.5px;margin:0 6px 0 5px;line-height:17px;letter-spacing:-.2px}

.form{height:157px;display:flex}
.fields{width:1415px}
.photo{width:185px;height:157px}
.quest{font:bold 34px "DejaVu Sans",sans-serif;fill:#1a2492}
.upper{display:flex;height:76px;padding-top:1px}
.col-a{width:462px}
.col-b{width:446px}
.sus{width:78px;height:64px}
.sus-a{font:bold 20px "Liberation Sans",sans-serif;fill:#009240}
.sus-b{font:bold 6.5px "Liberation Sans",sans-serif;fill:#27247b}
.row{display:grid;height:24px;align-items:start}
.row label{text-align:right;padding:3px 4px 0 0;white-space:nowrap;letter-spacing:-.2px;line-height:15px}
.in{height:22px;background:#e1e1c1;border:1px solid #666;font-weight:bold;padding:2px 2px 0;line-height:15px;overflow:hidden;white-space:nowrap;position:relative;letter-spacing:-.1px}
.num{text-align:right}
.combo{padding-left:3px}
.combo b{position:absolute;right:0;top:0;width:17px;height:20px;background:#e1e1e1;border:1px solid #adadad;display:grid;place-items:center}
.combo b svg{width:10px;height:6px}
.soft{border-color:#adadad;box-shadow:inset 0 0 0 1px #fff;height:24px;padding-top:3px}
.soft b{top:1px;right:1px}
.r-tipo .combo:last-child{margin-top:1px}
.white{height:24px;box-shadow:inset 0 0 0 2px #fff}
.white b{background:#fff;border:0;top:2px;height:18px}
.btn{width:18px;height:20px;background:#e1e1e1;border:1px solid #ccc;display:grid;place-items:center;margin-top:1px}
.btn svg{width:16px;height:16px}
.btn.dis{width:21px;background:#ccc;border-color:#bfbfbf}
.btn .s-bino{width:13px;height:12px;margin:5px 0 0 3px}
.btn .s-doc{width:12px;height:14px;margin:2px 0 0 2px}
.r-conv{grid-template-columns:64px 78px 318px}
.r-conv label{padding-top:4px}
.r-conv .num,.r-pac .num{width:77px}
.r-pac{grid-template-columns:64px 79px 24px 23px 17px 18px auto;padding-top:1px}
.r-pac label,.r-mat label{padding-top:2px;padding-right:3px}
.r-pac strong{color:#000080;padding:4px 0 0 8px;white-space:nowrap;letter-spacing:-.05px}
.r-mat{grid-template-columns:64px 182px 18px}
.r-mat .in{width:180px;letter-spacing:-.3px}
.r-tipo{grid-template-columns:32px 121px 41px 204px}
.r-tipo label{padding-top:4px;padding-right:3px}
.r-data{grid-template-columns:32px 89px 31px 42px;padding-top:1px}
.r-data label{padding-right:2px}
.r-guia{grid-template-columns:32px 143px 78px 145px}
.r-guia label{padding-right:1px}
.r-guia label:nth-of-type(2){padding-right:0}
.lower{display:flex;height:81px}
fieldset{margin:0;padding:0;border:1px solid #dcdcdc;min-width:0}
legend{padding:0;line-height:12px}
.solic{width:385px;height:83px;margin-top:-4px}
.solic legend{margin-left:7px;font-weight:bold;line-height:15px;height:14px;letter-spacing:.13px}
.solic label{padding-top:2px}
.r-s1{grid-template-columns:62px 101px 39px 181px}
.r-s1 label:nth-of-type(2),.r-s2 label:nth-of-type(3){padding-right:2px}
.r-s1 label{padding-right:2px}
.r-s2{grid-template-columns:62px 31px 24px 68px 80px 118px}
.r-s3{grid-template-columns:62px 321px}
.prof{width:410px;padding-top:13px}
.prof .row{height:23px}
.r-p1{grid-template-columns:109px 53px 226px 21px}
.r-p1 label,.r-p2 label,.r-p3 label{padding-right:3px}
.r-p1 .num{width:52px}
.r-p1 .combo{width:221px;padding-left:2px}
.r-p2{grid-template-columns:14px 95px 301px}
.r-p2 .in{letter-spacing:.18px;padding-left:2px}
.r-p2 .dropper{width:14px;height:14px;margin:1px 0 0 2px}
.r-p3{grid-template-columns:109px 29px 92px 21px 57px 50px}
.r-p3 .in{padding-left:1px}
.r-p3 .in:nth-of-type(2){width:90px}
.covid{width:102px;margin-top:4px;display:flex;height:78px;position:relative}
.covid legend,.risco legend{margin-left:7px;white-space:nowrap;height:13px}
.covid legend{width:94px;overflow:hidden}
.covid svg{width:40px;height:34px;position:absolute;left:57px;top:3px}
.radios{font-size:12.5px;line-height:14px;display:grid;row-gap:3px}
.radios span{display:flex;gap:4px;height:14px;letter-spacing:-.1px}
.radios i{width:13px;height:13px;border:1px solid #333;border-radius:50%;background:#fff}
.radios .on{box-shadow:inset 0 0 0 3px #fff;background:#333}
.covid .radios{padding:5px 0 0 7px;align-content:start;row-gap:4px}
.risco{width:149px;margin:4px 0 0 1px;height:78px}
.risco .radios{padding:4px 0 0 7px;grid-template-columns:69px 70px}

.panel{height:442px;background:#f0f0f0;border-top:1px solid #d5d5d5;border-left:1px solid #ddd;display:flex}
.vtabs{width:47px;padding:5px 0 0 3px;display:flex;flex-direction:column;border-left:3px solid #fff;gap:2px}
.vtabs span{writing-mode:vertical-rl;transform:rotate(180deg);width:39px;font-weight:bold;font-size:13.5px;text-align:center;line-height:38px;border-top:1px solid #777;border-right:1px solid #ddd}
.vtabs .active{height:106px;width:42px;margin-left:-1px;background:#0078d7;color:#fff}
.vtabs span:nth-child(2){height:65px}
.vtabs span:nth-child(3){height:71px}
.sheet{width:1525px;padding:7px 3px 0 0;border-top:1px solid #fff;border-right:1px solid #777;height:441px;border-bottom:3px double #666;display:flex;flex-direction:column}
.navy{height:22px;background:#003870;margin-top:-1px}
.mudar{height:26px;background:#a6c9f0;display:flex;padding:4px 0 0 3px;font-weight:bold;font-size:13.5px}
.mudar>span{width:46px}
.mudar .box{margin-top:2px}
.mudar .apres{padding:2px 0 0 3px;width:100px;white-space:nowrap}
.mask{width:58px;height:20px;margin:-1px 0 0;background:#fff;border:1px solid #666;font-weight:normal;padding:2px 1px;font-style:italic;white-space:nowrap}
.gridbox{flex:1;border:1px solid #666;background:#fff;display:flex;flex-direction:column;margin-bottom:1px}
.trow{display:grid;grid-template-columns:12px 19px 89px 936px 56px 89px 53px 88px 103px 75px;font-weight:bold}
.thead{height:21px;background:#227cb5;line-height:22px}
.thead span{padding-left:2px;white-space:nowrap;font-size:13.3px}
.tbody{height:18px;background:#d2e9ff;font-style:italic;line-height:19px;font-size:12.5px;letter-spacing:-.1px}
.tbody span{border-right:1px solid #b9bcc0;padding-left:3px;white-space:nowrap;overflow:hidden}
.tbody .mark{background:#227cb5;border:0}
.mark::before{content:"";display:block;border:5px solid transparent;border-left:6px solid #000;border-right:0;margin-top:4px}
.void{flex:1}
.hscroll{height:16px;background:#f0f0f0;display:flex;align-items:center;padding:0 5px}
.hscroll svg{width:6px;height:8px}
.hscroll .flip{transform:scaleX(-1)}
.hscroll i{width:17px;height:16px;background:#cdcdcd;margin-left:6px}
.hscroll svg:last-child{margin-left:auto}
.tools{padding:9px 0 0 4px;display:flex;flex-direction:column;gap:11px}
.tools svg{width:16px;height:16px}

.tabs{height:34px;background:#f0f0f0;display:flex;font-weight:bold;padding-left:1px}
.tabs span{margin-top:2px;height:30px;border:1px solid #d9d9d9;border-left:0;border-bottom:0;padding-top:6px;text-align:center;white-space:nowrap}
.tabs .active{width:70px;height:32px;background:#fff;padding-top:8px;border-color:#fff}
.tabs span:nth-child(2){width:153px}.tabs span:nth-child(3){width:124px;letter-spacing:.15px}.tabs span:nth-child(4){width:126px;letter-spacing:.1px}.tabs span:nth-child(5){width:79px;letter-spacing:.1px}.tabs span:nth-child(6){width:80px}.tabs span:nth-child(7){width:48px;text-align:left;padding-left:6px}.tabs span:nth-child(8){width:60px;padding-left:2px}

.totals{height:41px;background:#003870;display:flex;color:#fff;padding-left:10px}
.tot label{display:block;font-weight:bold;height:16px;line-height:19px;white-space:nowrap;letter-spacing:.1px}
.tot div{background:#cce0f8;color:#000;height:22px;font-weight:bold;text-align:right;padding:1px 1px 0 0}
.t1{width:100px;margin-right:4px}.t2{width:100px;margin-right:112px}.t3{width:135px;margin-right:5px}.t4{width:103px;margin-right:6px}
.t2 label{padding-left:2px;line-height:17px}
.t4 label{padding-left:2px;line-height:16px;letter-spacing:.25px}
.t3 label{letter-spacing:-.1px}
.t3 div,.t4 div{margin-top:0}
.totals p{padding-top:23px;font-size:13.3px;letter-spacing:-.05px}

.toolbar{height:55px;background:#f0f0f0;display:flex;overflow:hidden}
.grp h2,.grp h3{height:15px;line-height:15px;white-space:nowrap}
.grp h3{font-weight:normal;font-size:11.5px;letter-spacing:-.5px}
.grp h2{font:bold 12px/16px "DejaVu Sans",Verdana,sans-serif;letter-spacing:-.3px;color:#000080}
.grp>div{display:flex;gap:2px}
.grp button{width:39px;height:38px;display:grid;place-items:center}
.grp svg{width:24px;height:22px}
.g-nav{width:178px;padding-left:7px;border-right:1px solid #999}
.g-nav>div{gap:2.6px}
.g-acao{width:135px;padding-left:6px;border-right:1px solid #999}
.g-acao svg{width:27px;height:27px}
.g-confirm{width:91px;padding-left:6px;border-right:1px solid #999}
.g-confirm .dis{background:#c8c8c8;border-color:#bfbfbf}
.g-confirm svg{width:26px;height:28px}
.g-confirm .stop{width:33px;height:33px}
.g-print{width:210px;padding-left:8px}
.g-print>div{gap:0}
.g-print h3{display:flex;gap:4px}
.grp.g-print button{width:95px;height:40px;display:flex;flex-direction:column;align-items:center;overflow:hidden;padding-top:1px}
.grp.g-print .focus{width:106px;border:2px solid #0078d7;outline:1px dotted #000;outline-offset:-3px;padding-top:0}
.g-print button svg{width:26px;height:23px}
.g-print button span{white-space:nowrap;line-height:14px}
.b-termo,.b-exames{height:38px;margin-top:15px}
.b-termo{width:55px;margin-left:5px;display:flex;flex-direction:column}
.checks{display:flex;justify-content:space-between;width:53px}
.tx{line-height:11px;width:100%;text-align:center}
.b-exames{width:49px}
.g-end{margin-left:auto;padding:1px 1px 0 0;display:flex;gap:2px}
.g-end button{height:53px}
.g-end .wa{width:128px;display:flex;align-items:center;gap:8px;padding-left:4px;white-space:nowrap;letter-spacing:-.35px}
.wa svg{width:28px;height:30px}
.guia{width:66px}.canc{width:53px}.work{width:51px}

.status{height:21px;background:#d2e9ff;border:1px solid #999;border-bottom:2px solid #aaa;display:flex;justify-content:space-between;padding:0 1px;font:13px/17px "Liberation Serif",serif;letter-spacing:-.4px}

.taskbar{height:40px;background:#1d2f3e;display:flex;color:#fff;font-family:"Open Sans","Noto Sans",sans-serif}
.start{width:48px;display:grid;place-items:center}
.start svg{width:16px;height:16px}
.search{width:344px;background:#f2f2f2;border:1px solid #999;display:flex;align-items:center;color:#333;font-size:15px;letter-spacing:-.3px}
.mag{width:16px;height:16px;margin:0 12px 0 11px}
.search span{width:231px;white-space:nowrap}
.hat{width:64px;height:32px;margin-left:1px}
.apps{display:flex}
.apps span{width:49px;display:grid;place-items:center}
.apps .tview{width:50px;margin-left:-1px}
.apps svg{width:24px;height:24px}
.apps .tview svg{width:16px;height:16px}
.apps .run{background:linear-gradient(#76b9ed,#76b9ed) center bottom/40px 2px no-repeat}
.apps .cur{background:linear-gradient(#76b9ed,#76b9ed) center bottom/100% 2px no-repeat #4a5966}
.cursive{font:italic bold 29px "Liberation Serif",serif;fill:#a00018}
.tray{margin-left:auto;width:275px;display:flex;align-items:center;font-size:12px;line-height:17px;letter-spacing:-.4px}
.news{width:24px;height:16px;margin-right:26px}
.up{width:12px;height:8px;margin-right:10px}
.net{width:16px;height:14px;margin-right:8px}
.vol{width:17px;height:14px;margin-right:8px}
.lang{width:28px}
.clock{width:62px;margin:0 16px 0 7px;text-align:center}
.bell{width:26px;height:26px;margin-top:2px}
.badge{font:12px "Open Sans",sans-serif;fill:#fff}

.menu{position:absolute;list-style:none;background:#f1f1f1;border:1px solid #ccc;padding:2px;box-shadow:3px 3px 2px rgba(0,0,0,.5);font:12px/22px "Open Sans","Noto Sans",sans-serif;letter-spacing:-.3px}
.menu li{height:22px;padding-left:32px;display:flex;align-items:center;white-space:nowrap}
.menu .sel{background:#91c9f7}
.menu .off{color:#6d6d6d}
.menu .bold{font-weight:bold;letter-spacing:-.37px}
.menu svg{width:6px;height:8px;margin:0 8px 0 auto}
.m1{left:412px;top:319px;width:314px;height:380px}
.m2{left:720px;top:231px;width:383px;height:358px}
.edge{position:absolute;left:1595px;top:257px;width:5px;height:324px;background:#7eb2ea;border-radius:4px 0 0 0}
.activate{position:absolute;left:1235px;top:775px;color:rgba(135,135,135,.6);font-family:"Open Sans","Noto Sans",sans-serif;white-space:nowrap}
.activate b{display:block;font-weight:normal;font-size:19px;line-height:24px}
.activate span{display:block;font-size:14px;line-height:22px;letter-spacing:.04px}
```
